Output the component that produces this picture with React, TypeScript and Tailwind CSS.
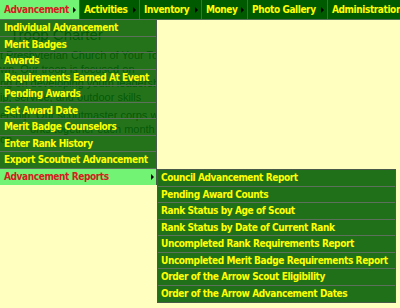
const topItems = [
  { label: 'Advancement', w: 'w-[80px]', active: true },
  { label: 'Activities', w: 'w-[60px]' },
  { label: 'Inventory', w: 'w-[62px]' },
  { label: 'Money', w: 'w-[46px]' },
  { label: 'Photo Gallery', w: 'w-[80px]' },
  { label: 'Administration', w: 'w-[90px]' },
];

const advMenu = [
  'Individual Advancement',
  'Merit Badges',
  'Awards',
  'Requirements Earned At Event',
  'Pending Awards',
  'Set Award Date',
  'Merit Badge Counselors',
  'Enter Rank History',
  'Export Scoutnet Advancement',
];

const reports = [
  'Council Advancement Report',
  'Pending Award Counts',
  'Rank Status by Age of Scout',
  'Rank Status by Date of Current Rank',
  'Uncompleted Rank Requirements Report',
  'Uncompleted Merit Badge Requirements Report',
  'Order of the Arrow Scout Eligibility',
  'Order of the Arrow Advancement Dates',
];

function Arrow() {
  return <span className="inline-block w-0 h-0 border-y-[3px] border-y-transparent border-l-[3px] border-l-black" />;
}

export default function App() {
  return (
    <div
      className="relative w-[400px] h-[308px] overflow-hidden bg-[#ffffc0]"
      style={{ fontFamily: '"DejaVu Sans Condensed", "DejaVu Sans", sans-serif' }}
    >
      {/* top nav */}
      <nav className="flex h-[20px] bg-[#005a00] border-b border-[#56705a] whitespace-nowrap">
        {topItems.map((it) => (
          <div
            key={it.label}
            className={`${it.w} shrink-0 flex items-center justify-between pl-[4px] pr-[3px] border-r text-[10px] font-bold tracking-[-0.4px] ${
              it.active
                ? 'bg-[#73f373] text-[#d42020] border-[#2e7a2e]'
                : 'text-[#ffff00] border-[#2e7a2e]'
            }`}
          >
            <span>{it.label}</span>
            {it.label !== 'Administration' && <Arrow />}
          </div>
        ))}
      </nav>

      {/* page content under the menus */}
      <main
        className="w-[157px] overflow-hidden whitespace-nowrap text-[#2a4a2a] text-[11px] leading-[14px]"
        style={{ fontFamily: '"Liberation Sans", Arial, sans-serif' }}
      >
        <h1 className="pl-[10px] pt-[5px] h-[28px] text-[15px] leading-[20px]">Troop Charter</h1>
        <p>t Presbyterian Church of Your To</p>
        <p>wn. Our troop is focused on</p>
        <p>ng on developing youth leadersh</p>
        <p>ip, service, and outdoor skills</p>
        <p className="mt-[4px]">ership. Our scoutmaster corps w</p>
        <p className="pl-[30px]">orks together each month t</p>
        <p className="-mt-[4px]">on</p>
      </main>

      {/* advancement dropdown */}
      <div className="absolute left-0 top-[20px] w-[157px] border-r border-[#4a5a4a] divide-y divide-[#5c705c] text-[10px] font-bold tracking-[-0.4px] whitespace-nowrap">
        {advMenu.map((t) => (
          <div key={t} className="h-[16.5px] flex items-center pl-[4px] bg-[rgba(0,92,0,0.86)] text-[#ffff00]">
            {t}
          </div>
        ))}
        <div className="h-[16.5px] flex items-center justify-between pl-[4px] pr-[2px] bg-[#73f373] text-[#d42020]">
          <span>Advancement Reports</span>
          <Arrow />
        </div>
      </div>

      {/* reports submenu */}
      <div className="absolute left-[157px] top-[169px] w-[239px] border border-[#4a5a4a] divide-y divide-[#5c705c] text-[10px] font-bold tracking-[-0.4px] whitespace-nowrap">
        {reports.map((t) => (
          <div key={t} className="h-[16.5px] flex items-center pl-[3px] bg-[rgba(0,92,0,0.88)] text-[#ffff00]">
            {t}
          </div>
        ))}
      </div>
    </div>
  );
}
